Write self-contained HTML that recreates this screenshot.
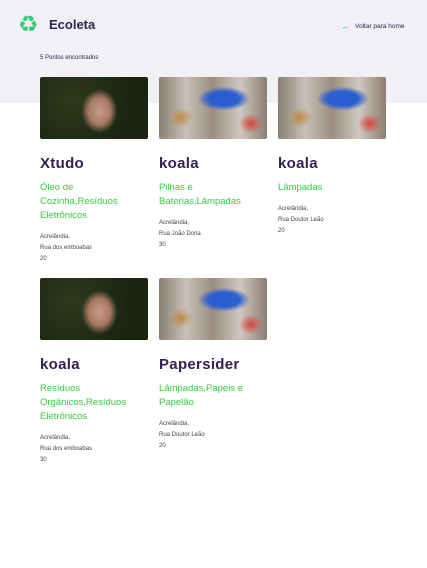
<!DOCTYPE html>
<html><head><meta charset="utf-8"><style>
*{margin:0;padding:0;box-sizing:border-box}
body{width:427px;height:568px;background:#fff;font-family:"Liberation Sans",sans-serif;position:relative;overflow:hidden}
.hdr{position:absolute;left:0;top:0;width:427px;height:103px;background:#f0f0f5}
.logo{position:absolute;left:18px;top:11px;font-family:"DejaVu Sans",sans-serif;font-size:23px;line-height:28px;color:#34cb79;font-weight:bold}
.brand{position:absolute;left:49px;top:17px;font-size:13px;font-weight:bold;color:#322153}
.back{position:absolute;left:341px;top:21px;font-size:6.5px;color:#322153}
.back span{color:#34cb79;font-size:9px;margin-right:5px;vertical-align:-1px}
.found{position:absolute;left:40px;top:55px;font-size:6px;color:#322153}
.card{position:absolute;width:108px}
.img{width:108px;height:62px;border-radius:2px}
.hands{background:radial-gradient(ellipse 18px 22px at 55% 55%,#c89c84 0,#a87a64 60%,transparent 100%),radial-gradient(circle at 30% 40%,#2e3a1c,#1a2410 70%)}
.trash{background:radial-gradient(ellipse 26px 12px at 60% 35%,#2b5fd0 0,#2b5fd0 60%,transparent 100%),radial-gradient(ellipse 12px 10px at 85% 75%,#d8463e 0,transparent 100%),radial-gradient(ellipse 12px 10px at 20% 65%,#c08a40 0,transparent 100%),linear-gradient(90deg,#8a8070,#c8c0b8,#9a8e80,#d0c8c0,#8a7e70)}
h2{font-size:15px;font-weight:bold;color:#322153;margin-top:16px;height:22px;letter-spacing:0.3px}
.it{font-size:9.5px;color:#34cb40;line-height:14px;margin-top:4px}
.ad{font-size:6px;color:#444;line-height:11px;margin-top:9px}
</style></head><body>
<div class="hdr"></div>
<div class="logo">♻</div>
<div class="brand">Ecoleta</div>
<div class="back"><span>←</span>Voltar para home</div>
<div class="found">5 Pontos encontrados</div>

<div class="card" style="left:40px;top:77px"><div class="img hands"></div><h2>Xtudo</h2><div class="it">Óleo de Cozinha,Resíduos Eletrônicos</div><div class="ad">Acrelândia,<br>Rua dos emboabas<br>20</div></div>
<div class="card" style="left:159px;top:77px"><div class="img trash"></div><h2>koala</h2><div class="it">Pilhas e Baterias,Lâmpadas</div><div class="ad">Acrelândia,<br>Rua João Doria<br>30</div></div>
<div class="card" style="left:278px;top:77px"><div class="img trash"></div><h2>koala</h2><div class="it">Lâmpadas</div><div class="ad">Acrelândia,<br>Rua Doutor Leão<br>20</div></div>
<div class="card" style="left:40px;top:278px"><div class="img hands"></div><h2>koala</h2><div class="it">Resíduos Orgânicos,Resíduos Eletrônicos</div><div class="ad">Acrelândia,<br>Rua dos emboabas<br>30</div></div>
<div class="card" style="left:159px;top:278px"><div class="img trash"></div><h2>Papersider</h2><div class="it">Lâmpadas,Papeis e Papelão</div><div class="ad">Acrelândia,<br>Rua Doutor Leão<br>20</div></div>
</body></html>
